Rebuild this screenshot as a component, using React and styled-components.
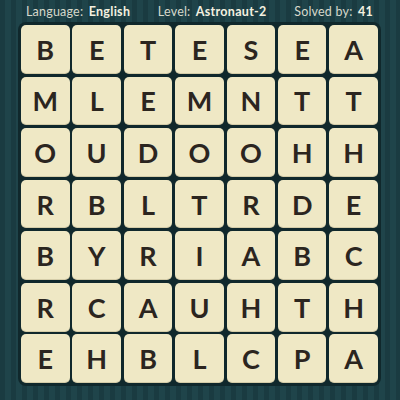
import React from "react"
import styled, { createGlobalStyle } from "styled-components"

const rows = [
  "BETESEA",
  "MLEMNTT",
  "OUDOOHH",
  "RBLTRDE",
  "BYRIABC",
  "RCAUHTH",
  "EHBLCPA",
]

const GlobalStyle = createGlobalStyle`
  html, body {
    margin: 0;
    padding: 0;
  }
  body {
    font-family: "Lato", "Open Sans", sans-serif;
  }
`

const App = () => {
  return (
    <Page>
      <GlobalStyle />
      <Header>
        <Stat>
          Language: <b>English</b>
        </Stat>
        <Stat>
          Level: <b>Astronaut-2</b>
        </Stat>
        <Stat>
          Solved by: <b>41</b>
        </Stat>
      </Header>
      <Board>
        {rows.map((row, r) =>
          row.split("").map((ch, c) => <Tile key={r + "-" + c}>{ch}</Tile>)
        )}
      </Board>
    </Page>
  )
}

const Page = styled.div`
  width: 400px;
  height: 400px;
  overflow: hidden;
  box-sizing: border-box;
  padding: 0 18px;
  display: flex;
  flex-direction: column;
  background-color: #1c3f45;
  background-image: repeating-linear-gradient(
    90deg,
    #1a3b41 0px,
    #1a3b41 5px,
    #1f444a 5px,
    #1f444a 11px
  );
`

const Header = styled.div`
  height: 22px;
  display: flex;
  align-items: center;
  justify-content: space-between;
  padding: 0 9px 0 8px;
`

const Stat = styled.span`
  font-size: 12.5px;
  color: #d6d8cb;
  letter-spacing: 0.2px;

  b {
    color: #f4f1e0;
    font-weight: 700;
    margin-left: 2px;
    letter-spacing: 0.3px;
  }
`

const Board = styled.div`
  display: grid;
  grid-template-columns: repeat(7, 48.5px);
  grid-auto-rows: 48.7px;
  gap: 2.9px;
  padding: 3px;
  width: max-content;
  background: #10282c;
  border-radius: 8px;
`

const Tile = styled.div`
  display: flex;
  align-items: center;
  justify-content: center;
  background: #efe8c5;
  border-radius: 5px;
  box-shadow: inset 0 -1px 0 rgba(90, 80, 40, 0.18);
  color: #2b251f;
  font-size: 27px;
  font-weight: 700;
`

export default App
